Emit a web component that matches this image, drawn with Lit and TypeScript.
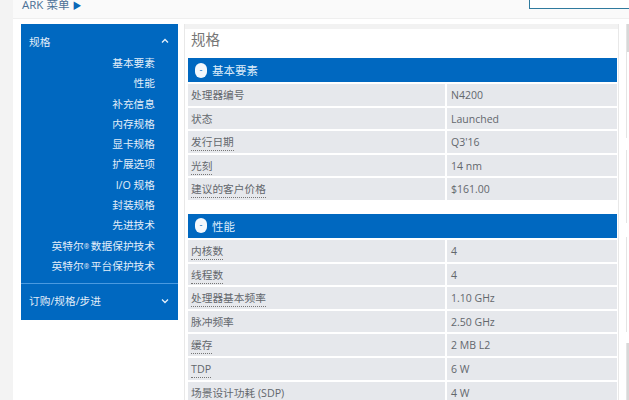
import { LitElement, html, css } from "lit";
import { customElement } from "lit/decorators.js";

const reg = html`<span class="reg">®</span>`;
const navItems = [
  html`基本要素`, html`性能`, html`补充信息`, html`内存规格`, html`显卡规格`, html`扩展选项`,
  html`I/O 规格`, html`封装规格`, html`先进技术`, html`英特尔${reg} 数据保护技术`, html`英特尔${reg} 平台保护技术`,
];
const sections = [
  { title: "基本要素", rows: [["处理器编号","N4200",0],["状态","Launched",0],["发行日期","Q3'16",1],["光刻","14 nm",1],["建议的客户价格","$161.00",1]] },
  { title: "性能", rows: [["内核数","4",1],["线程数","4",1],["处理器基本频率","1.10 GHz",1],["脉冲频率","2.50 GHz",0],["缓存","2 MB L2",1],["TDP","6 W",1],["场景设计功耗 (SDP)","4 W",1]] },
];

@customElement("app-root")
export class AppRoot extends LitElement {
  static styles = css`
    :host { display: block; width: 629px; height: 400px; overflow: hidden; background: #f3f3f3; color: #63676c;
      font-family: "Open Sans", "Noto Sans CJK SC", sans-serif; font-size: 10.7px; }
    .top { height: 19px; box-sizing: border-box; background: #fafafa; margin-left: 13px; padding-left: 9px; display: flex; justify-content: space-between; border-bottom: 1px solid #efefef; overflow: hidden; }
    .ark { font-size: 11.5px; line-height: 10px; color: #4d7196; }
    .ark i { font-style: normal; color: #0a68b8; font-size: 9px; }
    .btn { width: 99px; height: 8px; box-sizing: content-box; border: 1px solid #2f7a9e; border-top: 0; border-right: 0; background: #fff; }
    .main { display: flex; height: 381px; background: #fff; margin-left: 13px; padding-top: 5px; box-sizing: border-box; }
    .nav { width: 157px; height: 296px; margin-left: 8px; background: #0068c0; color: #e3eef9; flex: none; }
    .head { display: flex; justify-content: space-between; align-items: center; padding: 5px 9px 0 8px; height: 29px; box-sizing: border-box; }
    .head svg { width: 8px; height: 6px; }
    .items { display: flex; flex-direction: column; align-items: flex-end; padding-right: 23px; height: 230px; }
    .items div { height: 20.3px; line-height: 20px; flex: none; white-space: nowrap; }
    .reg { font-size: 6.5px; vertical-align: 1px; letter-spacing: -1px; }
    .sep { border-top: 1px solid #4a9ae0; }
    .sep .head { height: 36px; padding-top: 0; padding-bottom: 3px; }
    .panel { margin-left: 6px; width: 435px; height: 376px; border: 1px solid #e8e8e8; border-bottom: 0; border-top: 0; padding: 0 1px 0 3px; box-sizing: border-box; overflow: hidden; flex: none; }
    h1 { height: 22px; font-size: 14.5px; font-weight: 400; line-height: 22px; color: #777; border-top: 5px solid #f2f2f2; margin: 0 -1px 7px -3px; padding-left: 6px; }
    .sec { margin-bottom: 14px; }
    .bar { height: 24px; background: #0068c0; color: #dcecfa; display: flex; align-items: center; gap: 5px; padding-left: 7px; font-size: 11.5px; }
    .dot { width: 12px; height: 15px; background: #f4f8fc; border-radius: 6px; color: #0068c0; font-size: 9px; line-height: 14px; text-align: center; }
    .row { display: grid; grid-template-columns: 257px 1fr; gap: 2px; margin-top: 2px; }
    .row div { background: #e6e8ec; height: 21.6px; line-height: 22px; padding-left: 3px; box-sizing: border-box; white-space: nowrap; }
    .row div + div { padding-left: 4px; font-size: 10.5px; }
    .row span.u { border-bottom: 1px dotted #777; padding-bottom: 1px; }
    .side { margin-left: 7px; width: 3px; height: 376px; flex: none; display: flex; flex-direction: column; }
    .blk { border-left: 1px solid #e4e4e4; box-sizing: border-box; flex: none; }
    .b1 { height: 114px; background: linear-gradient(#d8d8d8 28px, #fff 28px); }
    .b2 { height: 73px; margin-top: 12px; }
    .b3 { height: 95px; margin-top: 14px; }
    .b4 { height: 57px; margin-top: 11px; background: #d8d8d8; }
  `;
  render() {
    return html`
      <div class="top"><span class="ark">ARK 菜单 <i>▶</i></span><span class="btn"></span></div>
      <div class="main">
        <nav class="nav">
          <div class="head"><span>规格</span><svg viewBox="0 0 8 6"><path d="M1 4.5 4 1.5 7 4.5" fill="none" stroke="#e6f0fa" stroke-width="1.3"/></svg></div>
          <div class="items">${navItems.map(t => html`<div>${t}</div>`)}</div>
          <div class="sep"><div class="head"><span>订购/规格/步进</span><svg viewBox="0 0 8 6"><path d="M1 1.5 4 4.5 7 1.5" fill="none" stroke="#e6f0fa" stroke-width="1.3"/></svg></div></div>
        </nav>
        <section class="panel">
          <h1>规格</h1>
          ${sections.map(s => html`<div class="sec">
            <div class="bar"><span class="dot">-</span><span>${s.title}</span></div>
            ${s.rows.map(r => html`<div class="row"><div>${r[2] ? html`<span class="u">${r[0]}</span>` : r[0]}</div><div>${r[1]}</div></div>`)}
          </div>`)}
        </section>
        <aside class="side"><div class="blk b1"></div><div class="blk b2"></div><div class="blk b3"></div><div class="blk b4"></div></aside>
      </div>`;
  }
}
